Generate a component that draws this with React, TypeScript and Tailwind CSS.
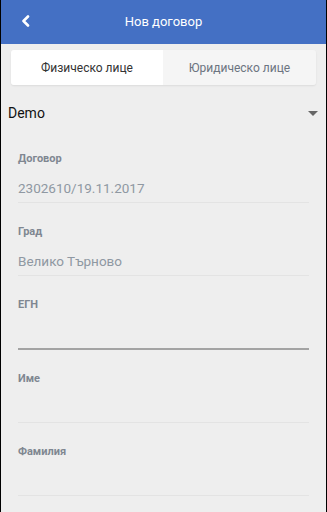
import React from 'react';

const fields = [
  { label: 'Договор', value: '2302610/19.11.2017' },
  { label: 'Град', value: 'Велико Търново' },
  { label: 'ЕГН', value: '', active: true },
  { label: 'Име', value: '' },
  { label: 'Фамилия', value: '' },
];

function Field({ label, value, active }: { label: string; value: string; active?: boolean }) {
  return (
    <div className="pt-[22px] mx-[17px]">
      <div className="h-[14px] leading-[14px] text-[11px] font-bold text-[#7f8791]">{label}</div>
      <div
        className={
          'mt-[12px] leading-[20px] text-[13.5px] text-[#8f98a2] ' +
          (active ? 'h-[26px] border-b-2 border-[#a3a3a3]' : 'h-[25px] border-b border-[#e3e3e3]')
        }
      >
        {value}
      </div>
    </div>
  );
}

export default function App() {
  return (
    <div
      className="w-[327px] h-[512px] overflow-hidden bg-[#eeeeee] border-l border-r border-black"
      style={{ fontFamily: 'Roboto, "Noto Sans", sans-serif' }}
    >
      {/* Header */}
      <div className="relative h-[44px] bg-[#4470c4] flex items-center justify-center">
        <button className="absolute left-[18px] top-[14px] w-[12px] h-[14px] flex items-center justify-center">
          <svg width="9" height="12" viewBox="0 0 9 12" fill="none">
            <path d="M7 1.5L2.5 6L7 10.5" stroke="white" strokeWidth="2.6" strokeLinecap="round" strokeLinejoin="round" />
          </svg>
        </button>
        <span className="text-white text-[13px]">Нов договор</span>
      </div>

      {/* Tabs */}
      <div className="mt-[6px] mx-[10px] h-[35px] flex rounded-[3px] overflow-hidden shadow-[0_1px_2px_rgba(0,0,0,0.08)]">
        <div className="w-[152px] bg-white flex items-center justify-center text-[12px] text-[#333]">
          Физическо лице
        </div>
        <div className="flex-1 bg-[#f5f5f5] flex items-center justify-center text-[12px] text-[#6c7480]">
          Юридическо лице
        </div>
      </div>

      {/* Select */}
      <div className="mt-[15px] h-[26px] pl-[7px] pr-[8px] flex items-center justify-between">
        <span className="text-[14px] text-[#111]">Demo</span>
        <svg width="10" height="5" viewBox="0 0 10 5">
          <path d="M0 0H10L5 5Z" fill="#666" />
        </svg>
      </div>

      {/* Fields */}
      <div className="mt-[4px]">
        {fields.map((f) => (
          <Field key={f.label} label={f.label} value={f.value} active={f.active} />
        ))}
      </div>
    </div>
  );
}
